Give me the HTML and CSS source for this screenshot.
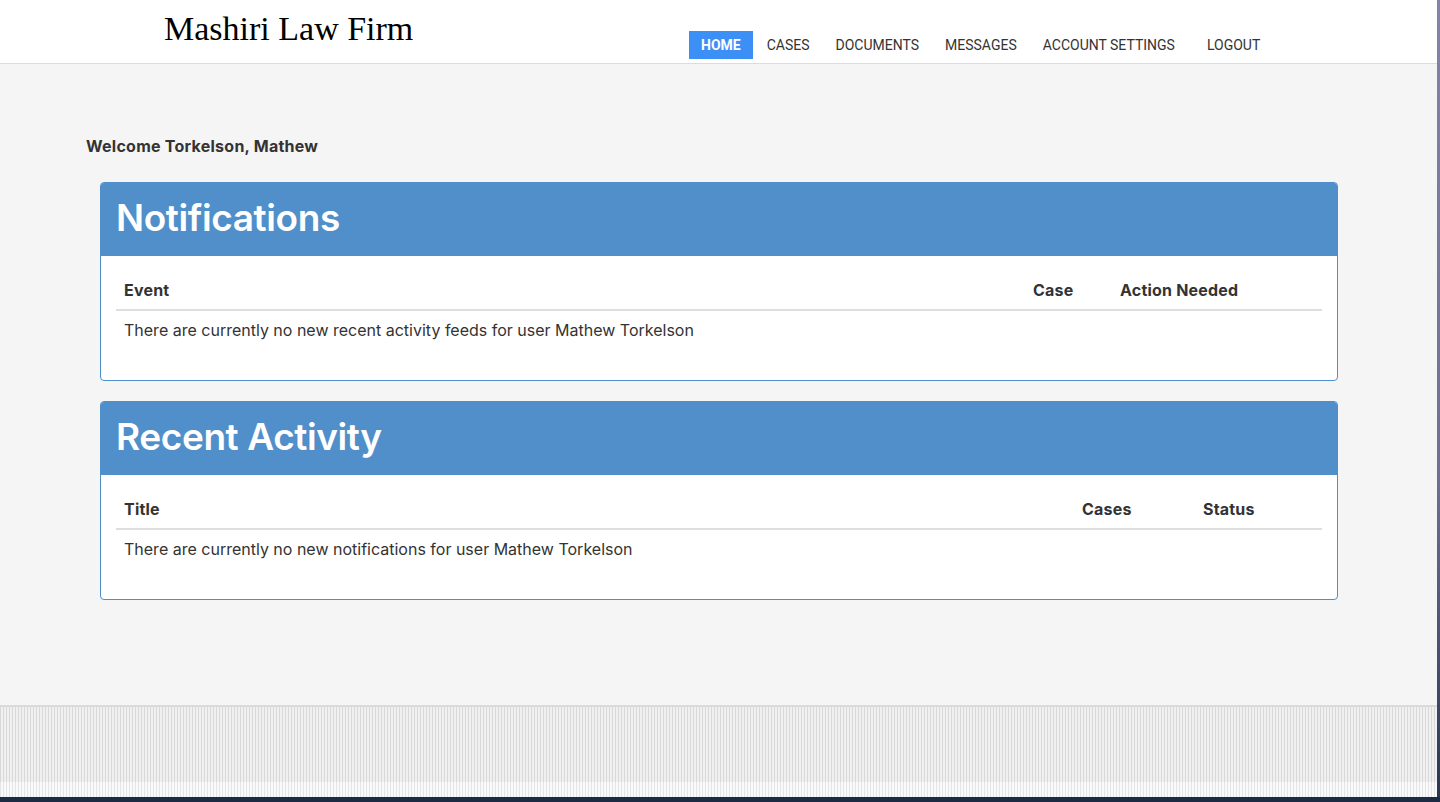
FILE: index.html
```html
<!DOCTYPE html>
<html>
<head>
<meta charset="utf-8">
<title>Mashiri Law Firm</title>
<link rel="stylesheet" href="styles.css">
</head>
<body>
<div class="window">
  <div class="page">
    <header class="topbar">
      <div class="brand">Mashiri Law Firm</div>
      <nav class="nav">
        <a class="nav-item active">HOME</a>
        <a class="nav-item">CASES</a>
        <a class="nav-item">DOCUMENTS</a>
        <a class="nav-item">MESSAGES</a>
        <a class="nav-item">ACCOUNT SETTINGS</a>
        <a class="nav-item logout">LOGOUT</a>
      </nav>
    </header>
    <main class="main">
      <div class="welcome">Welcome Torkelson, Mathew</div>
      <section class="panel">
        <div class="panel-head"><h2>Notifications</h2></div>
        <div class="panel-body">
          <table class="tbl">
            <thead>
              <tr><th class="c-main">Event</th><th class="c-case">Case</th><th class="c-action">Action Needed</th></tr>
            </thead>
            <tbody>
              <tr><td colspan="3">There are currently no new recent activity feeds for user Mathew Torkelson</td></tr>
            </tbody>
          </table>
        </div>
      </section>
      <section class="panel">
        <div class="panel-head"><h2>Recent Activity</h2></div>
        <div class="panel-body">
          <table class="tbl">
            <thead>
              <tr><th class="c-main">Title</th><th class="c-cases">Cases</th><th class="c-status">Status</th></tr>
            </thead>
            <tbody>
              <tr><td colspan="3">There are currently no new notifications for user Mathew Torkelson</td></tr>
            </tbody>
          </table>
        </div>
      </section>
    </main>
    <footer class="footer">
      <div class="footer-inner"></div>
      <div class="footer-base"></div>
    </footer>
  </div>
  <div class="edge"></div>
</div>
<div class="desktop"></div>
</body>
</html>
```
FILE: styles.css
```css
* { box-sizing: border-box; }
html, body { margin: 0; padding: 0; }
body {
  width: 1440px;
  height: 802px;
  overflow: hidden;
  background: #1d2c45;
  font-family: Inter, "Liberation Sans", sans-serif;
  color: #333;
}
.window {
  display: flex;
  height: 797px;
}
.page {
  width: 1437px;
  display: flex;
  flex-direction: column;
  background: #f5f5f5;
}
.edge {
  width: 3px;
  background: linear-gradient(180deg, #8483a8 0%, #6f6f95 60%, #2a3654 100%);
}
.desktop {
  height: 5px;
  background: #1c2a44;
}
.topbar {
  height: 64px;
  background: #fff;
  border-bottom: 1px solid #dcdcdc;
  display: flex;
  align-items: flex-start;
  padding-left: 164px;
}
.brand {
  font-family: "Liberation Serif", serif;
  font-size: 34px;
  color: #000;
  line-height: 1;
  padding-top: 12px;
  width: 525px;
}
.nav {
  display: flex;
  margin-top: 31px;
}
.nav-item {
  font-family: Roboto, "Liberation Sans", sans-serif;
  font-size: 14px;
  color: #333;
  height: 28px;
  line-height: 29px;
  padding: 0 13px;
}
.nav-item.active {
  background: #3c8ff5;
  color: #fff;
  font-weight: 700;
  padding: 0 12px;
  margin-right: 1px;
}
.nav-item.logout { margin-left: 6px; }
.main {
  flex: 1;
  padding: 72px 99px 0 86px;
}
.welcome {
  font-size: 16px;
  font-weight: 700;
  letter-spacing: 0.25px;
  color: #333;
  line-height: 20px;
  margin-bottom: 26px;
}
.panel {
  margin-left: 14px;
  margin-bottom: 20px;
  border: 1px solid #4f8ec8;
  border-radius: 4px;
  background: #fff;
  overflow: hidden;
  height: 199px;
}
.panel-head {
  background: #508fc9;
  height: 73px;
  padding: 0 15px 5px;
  display: flex;
  align-items: center;
}
.panel-head h2 {
  margin: 0;
  color: #fff;
  font-size: 37px;
  font-weight: 600;
  letter-spacing: -0.4px;
  line-height: 1;
}
.panel-body {
  padding: 16px 15px 0;
}
.tbl {
  width: 100%;
  border-collapse: collapse;
  font-size: 16px;
}
.tbl th {
  text-align: left;
  font-weight: 700;
  letter-spacing: 0.2px;
  padding: 0 8px 2px;
  height: 38px;
  vertical-align: middle;
  border-bottom: 2px solid #dedede;
}
.tbl td {
  padding: 0 8px;
  height: 38px;
  vertical-align: middle;
}
.c-case { width: 87px; }
.c-action { width: 210px; }
.c-cases { width: 121px; }
.c-status { width: 127px; }
.footer {
  height: 92px;
  border-top: 2px solid #dadada;
  display: flex;
  flex-direction: column;
}
.footer-inner {
  flex: 1;
  background: repeating-linear-gradient(90deg, #d9d9d9 0 1px, #f0f0f0 1px 3px);
}
.footer-base {
  height: 15px;
  background: repeating-linear-gradient(90deg, #e4e4e4 0 1px, #fafafa 1px 3px);
}
```
